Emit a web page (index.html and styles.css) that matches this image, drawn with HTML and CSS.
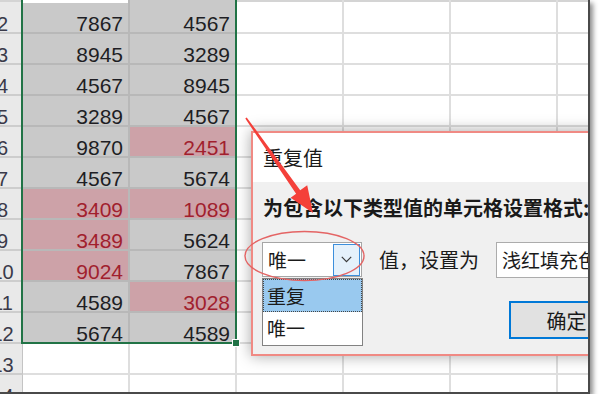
FILE: index.html
```html
<!DOCTYPE html>
<html lang="zh">
<head>
<meta charset="utf-8">
<title>重复值</title>
<link rel="stylesheet" href="styles.css">
</head>
<body>
<div class="screen">
  <div class="sheet">
    <div class="row top"><div class="rh"></div><div class="c sel act"></div><div class="c sel"></div><div class="c"></div><div class="c"></div><div class="c"></div><div class="c"></div></div>
    <div class="row"><div class="rh">2</div><div class="c sel">7867</div><div class="c sel">4567</div><div class="c"></div><div class="c"></div><div class="c"></div><div class="c"></div></div>
    <div class="row"><div class="rh">3</div><div class="c sel">8945</div><div class="c sel">3289</div><div class="c"></div><div class="c"></div><div class="c"></div><div class="c"></div></div>
    <div class="row"><div class="rh">4</div><div class="c sel">4567</div><div class="c sel">8945</div><div class="c"></div><div class="c"></div><div class="c"></div><div class="c"></div></div>
    <div class="row"><div class="rh">5</div><div class="c sel">3289</div><div class="c sel">4567</div><div class="c"></div><div class="c"></div><div class="c"></div><div class="c"></div></div>
    <div class="row"><div class="rh">6</div><div class="c sel">9870</div><div class="c sel hit">2451</div><div class="c"></div><div class="c"></div><div class="c"></div><div class="c"></div></div>
    <div class="row"><div class="rh">7</div><div class="c sel">4567</div><div class="c sel">5674</div><div class="c"></div><div class="c"></div><div class="c"></div><div class="c"></div></div>
    <div class="row"><div class="rh">8</div><div class="c sel hit">3409</div><div class="c sel hit">1089</div><div class="c"></div><div class="c"></div><div class="c"></div><div class="c"></div></div>
    <div class="row"><div class="rh">9</div><div class="c sel hit">3489</div><div class="c sel">5624</div><div class="c"></div><div class="c"></div><div class="c"></div><div class="c"></div></div>
    <div class="row"><div class="rh">10</div><div class="c sel hit">9024</div><div class="c sel">7867</div><div class="c"></div><div class="c"></div><div class="c"></div><div class="c"></div></div>
    <div class="row"><div class="rh">11</div><div class="c sel">4589</div><div class="c sel hit">3028</div><div class="c"></div><div class="c"></div><div class="c"></div><div class="c"></div></div>
    <div class="row"><div class="rh">12</div><div class="c sel">5674</div><div class="c sel">4589</div><div class="c"></div><div class="c"></div><div class="c"></div><div class="c"></div></div>
    <div class="row"><div class="rh">13</div><div class="c"></div><div class="c"></div><div class="c"></div><div class="c"></div><div class="c"></div><div class="c"></div></div>
    <div class="row"><div class="rh">14</div><div class="c"></div><div class="c"></div><div class="c"></div><div class="c"></div><div class="c"></div><div class="c"></div></div>
  </div>

  <div class="selection"><span class="handle"></span></div>

  <div class="dialog">
    <div class="title">重复值</div>
    <div class="body">
      <div class="label">为包含以下类型值的单元格设置格式:</div>
      <div class="fields">
        <div class="combo">
          <span class="combo-text">唯一</span>
          <span class="combo-btn">
            <svg width="11" height="7" viewBox="0 0 11 7"><path d="M0.8 0.8 L5.5 5.6 L10.2 0.8" fill="none" stroke="#3a3a3a" stroke-width="1.2"/></svg>
          </span>
          <div class="list">
            <div class="item on">重复</div>
            <div class="item">唯一</div>
          </div>
        </div>
        <span class="set-label">值，设置为</span>
        <div class="fill">浅红填充色深红色文本</div>
      </div>
      <div class="actions"><div class="btn">确定</div></div>
    </div>
  </div>

  <svg class="annot" width="590" height="394" viewBox="0 0 590 394">
    <ellipse cx="304.5" cy="256" rx="59.5" ry="24.5" fill="none" stroke="#e46464" stroke-width="1.4"/>
    <polygon points="246.7,117.4 300.2,190.2 307.2,185.3 313,213 290.6,197.7 296.1,193.8 245.3,118.6" fill="#f4403a"/>
  </svg>
</div>
</body>
</html>
```

FILE: styles.css
```css
body {
  margin: 0;
  background: #ffffff;
  font-family: "Liberation Sans", Arial, sans-serif;
}

.screen {
  position: relative;
  width: 588px;
  height: 392px;
  overflow: hidden;
  background: #ffffff;
  border-right: 2px solid #4a4a4a;
  border-bottom: 2px solid #4a4a4a;
  box-shadow: 3px 3px 5px rgba(0, 0, 0, 0.45);
}

.sheet {
  margin-left: -17px;
}

.row {
  display: grid;
  grid-template-columns: 40px repeat(6, 107px);
  height: 31px;
}

.rh,
.c {
  box-sizing: border-box;
  height: 31px;
  padding-top: 11px;
  line-height: 20px;
  border-bottom: 2px solid #dedede;
  border-right: 2px solid #dedede;
  white-space: nowrap;
}

.rh {
  background: #e9e9e9;
  text-align: center;
  font-size: 20px;
  color: #3a3a4a;
  border-right: 1px solid #c4c4c4;
  border-bottom-color: #cdcdcd;
}

.c {
  text-align: right;
  padding-right: 5px;
  font-size: 21px;
  color: #1e1e24;
}

.c.sel {
  background: #c9c9c9;
  border-color: #b8b8b8;
}

.c.hit {
  background: #cda2a8;
  color: #a11f2e;
}

.row.top {
  height: 3px;
}

.row.top .rh,
.row.top .c {
  height: 3px;
  padding: 0;
  border-bottom: 0;
  box-shadow: inset 0 2px 0 #d4d4d4;
}

.row.top .c.sel {
  box-shadow: none;
}

.row.top .c.act {
  background: #ffffff;
}

.selection {
  position: absolute;
  left: 21px;
  top: -5px;
  width: 216px;
  height: 349px;
  box-sizing: border-box;
  border: 2px solid #217346;
}

.handle {
  position: absolute;
  right: -5px;
  bottom: -5px;
  width: 6px;
  height: 6px;
  background: #217346;
  border: 1px solid #ffffff;
}

.dialog {
  position: absolute;
  left: 251px;
  top: 131px;
  width: 400px;
  border: 2px solid #f08a84;
  background: #f0f0f0;
  box-shadow: 0 0 14px rgba(0, 0, 0, 0.35);
  font-family: "Noto Sans CJK SC", "Liberation Sans", sans-serif;
  color: #1a1a1a;
}

.title {
  height: 49px;
  background: #ffffff;
  display: flex;
  align-items: center;
  padding-left: 10px;
  font-size: 20px;
}

.body {
  padding: 12px 0 15px 9px;
}

.label {
  padding-left: 1px;
  font-weight: bold;
  font-size: 20px;
  line-height: 28px;
  white-space: nowrap;
}

.fields {
  display: flex;
  align-items: center;
  margin-top: 20px;
  height: 35px;
}

.combo {
  position: relative;
  flex: none;
  width: 100px;
  height: 35px;
  box-sizing: border-box;
  border: 1px solid #a6a6a6;
  background: #ffffff;
  display: flex;
  align-items: center;
}

.combo-text {
  flex: 1;
  padding-left: 5px;
  font-size: 19px;
}

.combo-btn {
  width: 27px;
  height: 32px;
  box-sizing: border-box;
  margin-right: 1px;
  border: 1px solid #3c8fdc;
  background: #e5f1fb;
  display: flex;
  align-items: center;
  justify-content: center;
}

.list {
  position: absolute;
  left: -1px;
  top: 35px;
  width: 101px;
  height: 68px;
  box-sizing: border-box;
  border: 1px solid #828282;
  background: #ffffff;
}

.item {
  height: 33px;
  box-sizing: border-box;
  padding-left: 4px;
  font-size: 19px;
  line-height: 31px;
}

.item.on {
  background: #99c9ef;
  border: 1px dotted #444444;
  padding-left: 3px;
}

.set-label {
  flex: none;
  margin-left: 17px;
  font-size: 20px;
}

.fill {
  flex: none;
  margin-left: 17px;
  width: 200px;
  height: 36px;
  box-sizing: border-box;
  border: 1px solid #acacac;
  background: #ffffff;
  display: flex;
  align-items: center;
  padding-left: 5px;
  font-size: 19px;
  white-space: nowrap;
}

.actions {
  margin-top: 24px;
  padding-left: 247px;
}

.btn {
  width: 115px;
  height: 38px;
  box-sizing: border-box;
  border: 2px solid #0078d7;
  background: #e1e1e1;
  font-size: 20px;
  display: flex;
  align-items: center;
  justify-content: center;
}

.annot {
  position: absolute;
  left: 0;
  top: 0;
  pointer-events: none;
}
```
